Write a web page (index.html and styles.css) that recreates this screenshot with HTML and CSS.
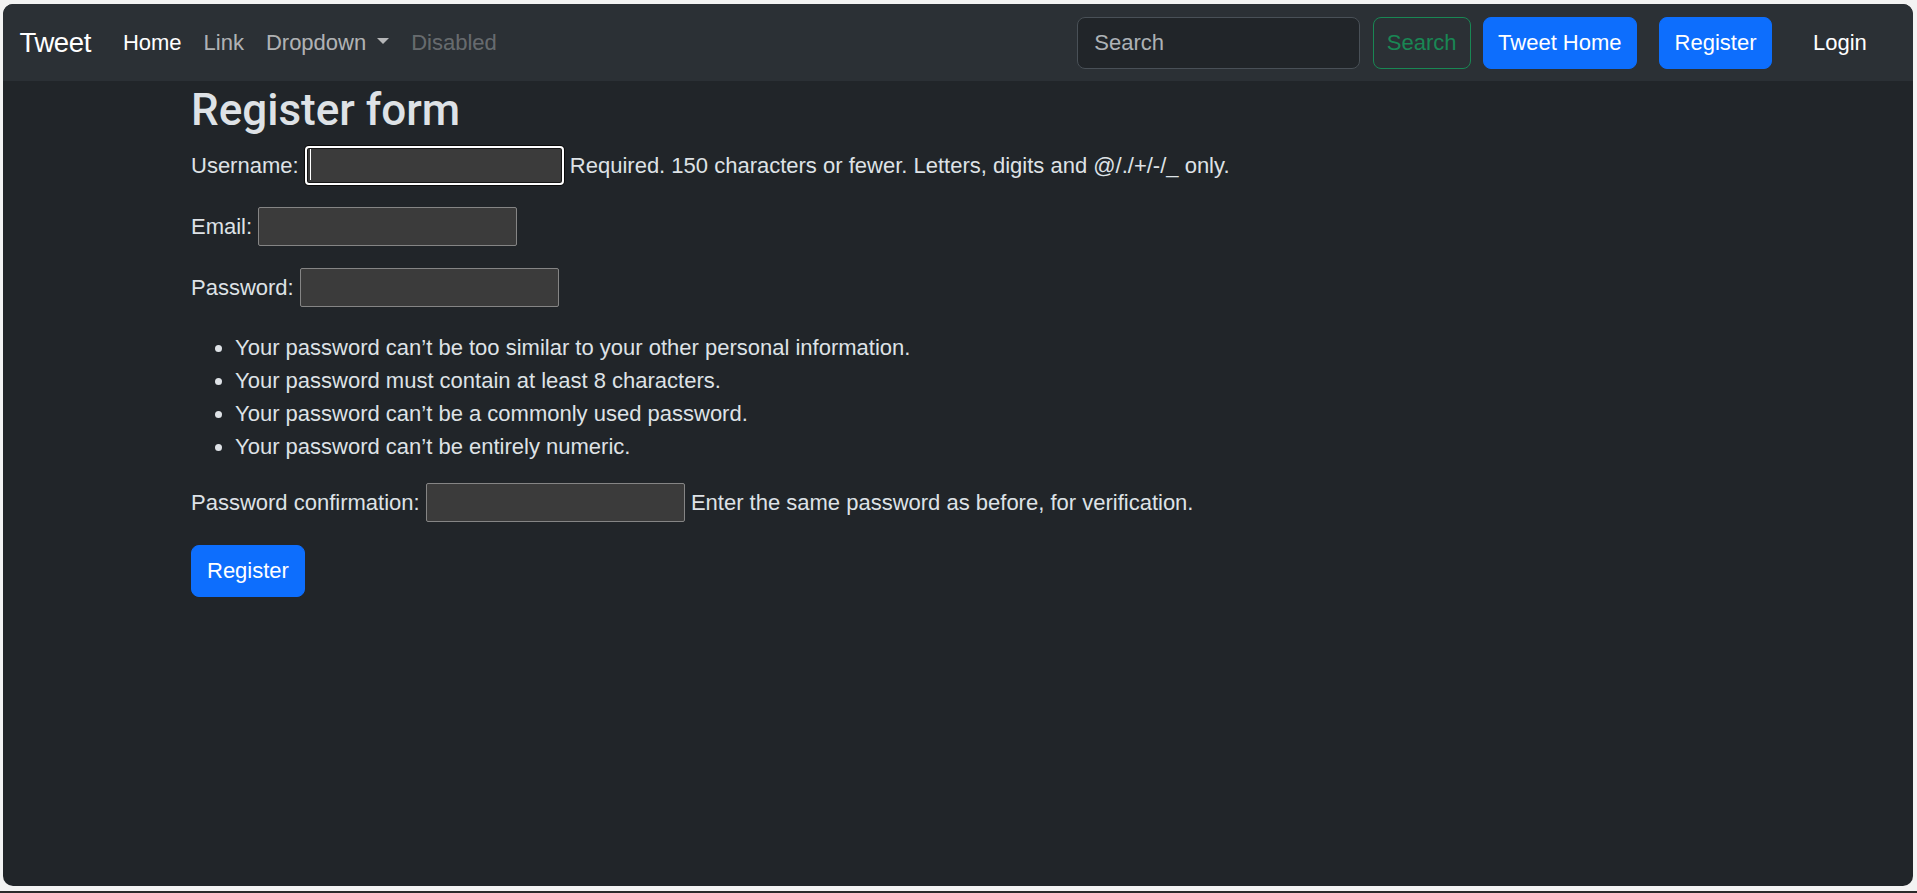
FILE: index.html
```html
<!DOCTYPE html>
<html lang="en">
<head>
<meta charset="utf-8">
<title>Register</title>
<link rel="stylesheet" href="styles.css">
</head>
<body>
<div class="window">
  <nav class="navbar">
    <a class="brand" href="#">Tweet</a>
    <ul class="nav">
      <li><a class="nav-link active" href="#">Home</a></li>
      <li><a class="nav-link" href="#">Link</a></li>
      <li><a class="nav-link dropdown-toggle" href="#">Dropdown</a></li>
      <li><a class="nav-link disabled" href="#">Disabled</a></li>
    </ul>
    <div class="nav-right">
      <form class="search">
        <input class="search-input" type="search" placeholder="Search">
        <button class="btn btn-outline" type="button">Search</button>
      </form>
      <a class="btn btn-primary gap-right" href="#">Tweet Home</a>
      <a class="btn btn-primary gap-login" href="#">Register</a>
      <a class="btn btn-plain" href="#">Login</a>
    </div>
  </nav>
  <main class="container">
    <h1 class="title">Register form</h1>
    <form class="register">
      <p class="row">Username: <span class="focus-wrap"><input class="field focused" type="text"><span class="caret"></span></span> <span class="help">Required. 150 characters or fewer. Letters, digits and @/./+/-/_ only.</span></p>
      <p class="row">Email: <input class="field" type="email"></p>
      <p class="row">Password: <input class="field" type="password"></p>
      <ul class="rules">
        <li>Your password can’t be too similar to your other personal information.</li>
        <li>Your password must contain at least 8 characters.</li>
        <li>Your password can’t be a commonly used password.</li>
        <li>Your password can’t be entirely numeric.</li>
      </ul>
      <p class="row">Password confirmation: <input class="field" type="password"> <span class="help">Enter the same password as before, for verification.</span></p>
      <button class="btn btn-primary btn-submit" type="button">Register</button>
    </form>
  </main>
</div>
<div class="taskbar"></div>
</body>
</html>
```

FILE: styles.css
```css
html, body {
  margin: 0;
  height: 100%;
}
body {
  background: #f3f3f3;
  font-family: "Liberation Sans", Arial, sans-serif;
  display: flex;
  flex-direction: column;
  overflow: hidden;
}
.window {
  margin: 4px 4px 0 3px;
  height: 882px;
  flex: none;
  background: #212529;
  border-radius: 10px;
  overflow: hidden;
  color: #dee2e6;
  font-size: 22px;
  line-height: 33px;
}
.taskbar {
  margin-top: 5px;
  height: 2px;
  background: #2b2b2b;
  flex: none;
}

/* navbar */
.navbar {
  height: 77px;
  box-sizing: border-box;
  background: #2b3035;
  display: flex;
  align-items: center;
  padding: 0 30.7px 0 16.5px;
}
.brand {
  font-size: 27.5px;
  line-height: 41px;
  letter-spacing: -0.4px;
  color: #fff;
  margin-right: 21px;
  text-decoration: none;
}
.nav {
  display: flex;
  list-style: none;
  margin: 0;
  padding: 0;
}
.nav-link {
  display: block;
  padding: 0 11px;
  color: rgba(255, 255, 255, 0.65);
  text-decoration: none;
}
.nav-link.active {
  color: #fff;
}
.nav-link.disabled {
  color: rgba(255, 255, 255, 0.3);
}
.dropdown-toggle::after {
  content: "";
  display: inline-block;
  margin-left: 11px;
  vertical-align: 5.6px;
  border-top: 6.6px solid;
  border-right: 6.6px solid transparent;
  border-left: 6.6px solid transparent;
}
.nav-right {
  margin-left: auto;
  display: flex;
  align-items: center;
}
.search {
  display: flex;
  margin: 0 12px 0 0;
}
.search-input {
  width: 283px;
  height: 52px;
  box-sizing: border-box;
  background: #212529;
  border: 1px solid #495057;
  border-radius: 8px;
  padding: 0 16.5px;
  font: inherit;
  color: #dee2e6;
  margin: 0 13px 0 0;
  outline: none;
}
.search-input::placeholder {
  color: rgba(222, 226, 230, 0.75);
}
.btn {
  display: inline-block;
  box-sizing: border-box;
  height: 52px;
  padding: 0 14.5px;
  border: 1px solid transparent;
  border-radius: 8px;
  font: inherit;
  line-height: 50px;
  text-decoration: none;
  background: transparent;
  cursor: pointer;
}
.btn-outline {
  padding: 0 13px;
  color: #198754;
  border-color: #198754;
}
.btn-primary {
  background: #0d6efd;
  border-color: #0d6efd;
  color: #fff;
}
.btn-plain {
  color: #fff;
}
.gap-right {
  margin-right: 22px;
}
.gap-login {
  margin-right: 25.5px;
}

/* content */
.container {
  padding: 0 0 0 188px;
}
.title {
  font-family: Roboto, "Liberation Sans", Arial, sans-serif;
  font-size: 44px;
  line-height: 52.8px;
  font-weight: 500;
  margin: 2.6px 0 9.6px;
  color: #dee2e6;
}
.row {
  margin: 0 0 22px;
}
.field {
  width: 259px;
  height: 39px;
  box-sizing: border-box;
  background: #3b3b3b;
  border: 1px solid #858585;
  border-radius: 2px;
  padding: 1px 3px;
  font: inherit;
  line-height: 33px;
  color: #fff;
  margin: 0;
  outline: none;
}
.focus-wrap {
  display: inline-block;
  position: relative;
}
.field.focused {
  border: 2px solid #ffffff;
  border-radius: 4px;
  box-shadow: 0 0 0 1px #0b0b0b, inset 0 0 0 1px #161616;
}
.caret {
  position: absolute;
  left: 5px;
  top: 3px;
  bottom: 5px;
  width: 1px;
  background: #ffffff;
}
.rules {
  margin: 0 0 20px;
  padding: 2px 0 0 44px;
}
.btn-submit {
  padding: 0 15px;
  margin-top: 1px;
}
```
